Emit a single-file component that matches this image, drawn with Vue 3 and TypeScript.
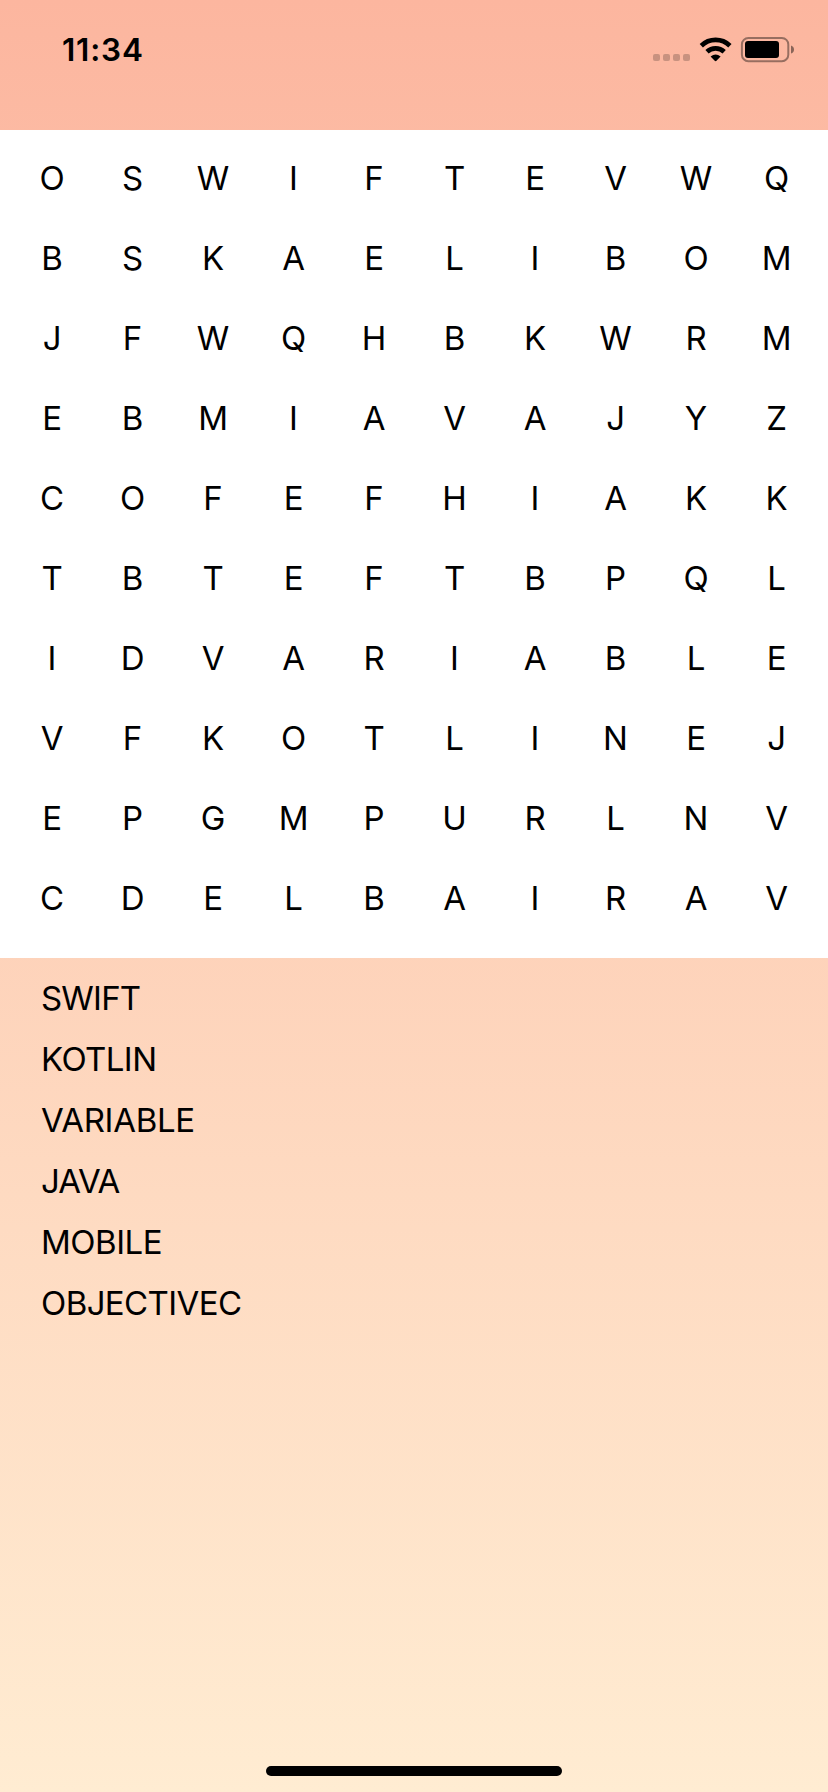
<script setup lang="ts">
interface Word {
  text: string
  tracking: number
}

const rows: string[] = [
  'OSWIFTEVWQ',
  'BSKAELIBOM',
  'JFWQHBKWRM',
  'EBMIAVAJYZ',
  'COFEFHIAKK',
  'TBTEFTBPQL',
  'IDVARIABLE',
  'VFKOTLINEJ',
  'EPGMPURLNV',
  'CDELBAIRAV',
]
const words: Word[] = [
  { text: 'SWIFT', tracking: -0.8 },
  { text: 'KOTLIN', tracking: -0.6 },
  { text: 'VARIABLE', tracking: -0.3 },
  { text: 'JAVA', tracking: -0.9 },
  { text: 'MOBILE', tracking: -0.5 },
  { text: 'OBJECTIVEC', tracking: -0.6 },
]
</script>

<template>
  <main class="screen">
    <header class="status">
      <span class="time">11:34</span>
      <svg class="icons" width="144" height="28" viewBox="0 0 144 28">
        <g opacity="0.2">
          <rect x="1" y="18" width="7" height="7" rx="2" />
          <rect x="11" y="18" width="7" height="7" rx="2" />
          <rect x="21" y="18" width="7" height="7" rx="2" />
          <rect x="31" y="18" width="7" height="7" rx="2" />
        </g>
        <g fill="none" stroke="#000" stroke-width="4.7">
          <path d="M49.3 9.7A20.6 20.6 0 0 1 77.9 9.7" />
          <path d="M55 15.8A12.6 12.6 0 0 1 72.2 15.8" />
        </g>
        <path d="M58.6 20.4Q63.6 16.6 68.6 20.4L64.5 24.8Q63.6 25.6 62.7 24.8Z" />
        <rect x="89.9" y="2" width="46.4" height="23.2" rx="6.4" fill="none" stroke="#000" stroke-width="2" opacity="0.4" />
        <rect x="93" y="5" width="34" height="17" rx="3" />
        <path d="M139 9.4Q142 10.4 142 13.4T139 17.4Z" opacity="0.45" />
      </svg>
    </header>
    <section class="grid">
      <template v-for="(row, r) in rows" :key="r">
        <span v-for="(letter, c) in row.split('')" :key="c" class="cell">{{ letter }}</span>
      </template>
    </section>
    <ul class="words">
      <li v-for="word in words" :key="word.text" :style="{ letterSpacing: word.tracking + 'px' }">{{ word.text }}</li>
    </ul>
    <div class="home"></div>
  </main>
</template>

<style>
body {
  margin: 0;
}
</style>

<style scoped>
.screen {
  display: flex;
  flex-direction: column;
  width: 828px;
  height: 1792px;
  box-sizing: border-box;
  padding-bottom: 16px;
  background: linear-gradient(#fcb69f, #ffecd2);
  color: #000;
  font-family: Inter, 'Liberation Sans', sans-serif;
}
.status {
  display: flex;
  flex: none;
  align-items: flex-start;
  justify-content: space-between;
  box-sizing: border-box;
  height: 130px;
  padding: 36px 32px 0 62px;
}
.time {
  font-size: 31.5px;
  font-weight: 600;
  line-height: 28px;
  letter-spacing: 0.8px;
}
.icons {
  display: block;
}
.grid {
  display: grid;
  flex: none;
  grid-template-columns: repeat(10, 1fr);
  grid-auto-rows: 80px;
  padding: 8px 11.2px 20px 11.8px;
  background: #fff;
}
.cell {
  font-size: 33px;
  line-height: 80px;
  text-align: center;
}
.words {
  flex: 1;
  margin: 0;
  padding: 10px 0 0 41px;
  list-style: none;
}
.words li {
  height: 61px;
  font-size: 33px;
  line-height: 61px;
}
.home {
  flex: none;
  align-self: center;
  width: 296px;
  height: 10px;
  border-radius: 5px;
  background: #000;
}
</style>
